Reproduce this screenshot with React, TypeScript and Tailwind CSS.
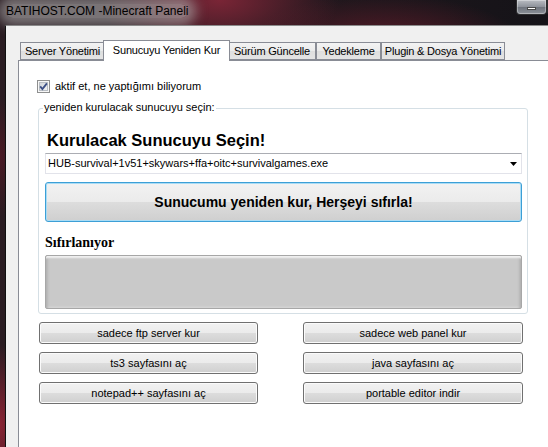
import React from "react";

const TABS = [
  { label: "Server Yönetimi", w: "w-[85px]" },
  { label: "Sunucuyu Yeniden Kur", w: "w-[127px]", active: true },
  { label: "Sürüm Güncelle", w: "w-[88px]" },
  { label: "Yedekleme", w: "w-[65px]" },
  { label: "Plugin & Dosya Yönetimi", w: "w-[124px]" },
];

const BUTTONS = [
  "sadece ftp server kur",
  "sadece web panel kur",
  "ts3 sayfasını aç",
  "java sayfasını aç",
  "notepad++ sayfasını aç",
  "portable editor indir",
];

function CheckBox() {
  return (
    <svg width="13" height="13" viewBox="0 0 13 13" className="shrink-0">
      <defs>
        <linearGradient id="cbFill" x1="0" y1="0" x2="1" y2="1">
          <stop offset="0" stopColor="#cfd3d8" />
          <stop offset="1" stopColor="#f4f5f6" />
        </linearGradient>
      </defs>
      <rect x="0.5" y="0.5" width="12" height="12" fill="#f7f7f7" stroke="#8e8f8f" />
      <rect x="2.5" y="2.5" width="8" height="8" fill="url(#cbFill)" stroke="#b9bec4" />
      <path d="M3.2 6.4 L5.4 9 L9.9 3.4" fill="none" stroke="#3c4f85" strokeWidth="1.8" />
    </svg>
  );
}

function WinButton({ children }: { children: React.ReactNode }) {
  return (
    <button className="h-[22px] rounded-[3px] border border-[#707070] bg-[linear-gradient(to_bottom,#f2f2f2_0%,#ebebeb_50%,#dddddd_50%,#cfcfcf_100%)] shadow-[inset_0_0_0_1px_#fbfbfb] text-[11px] leading-[13px] text-black">
      {children}
    </button>
  );
}

export default function App() {
  return (
    <div className="w-[548px] h-[447px] overflow-hidden flex flex-col font-['Liberation_Sans',Arial,sans-serif] bg-[#1b1418] bg-[radial-gradient(ellipse_120px_60px_at_40%_0%,#7a2536_0%,transparent_100%),radial-gradient(ellipse_140px_50px_at_70%_10%,#5a1b28_0%,transparent_100%),radial-gradient(ellipse_30px_80px_at_0%_95%,#8a2434_0%,transparent_100%),radial-gradient(ellipse_20px_60px_at_0%_35%,#4a1a24_0%,transparent_100%),linear-gradient(to_right,#2a1c22,#151318)]">
      {/* title bar */}
      <div className="h-[25px] shrink-0 flex items-start">
        <span className="mt-[4px] ml-[6px] text-[12px] leading-[14px] text-black bg-[#bdbdbd]/55 rounded-[8px] shadow-[0_0_12px_8px_rgba(185,185,185,0.55)]">
          BATIHOST.COM -Minecraft Paneli
        </span>
        <div className="flex-1" />
        <div className="flex shrink-0 -mr-[26px]">
          <div className="w-[31px] h-[15px] rounded-b-[4px] border border-t-0 border-[#2e2e30] bg-[linear-gradient(to_bottom,#b9bcc2_0%,#8d9199_50%,#6e737c_50%,#8c9098_100%)] shadow-[inset_0_0_0_1px_rgba(255,255,255,0.35)] flex items-center justify-center">
            <div className="w-[9px] h-[3px] bg-white border border-[#4a4a4a] mt-[2px]" />
          </div>
          <div className="w-[27px] h-[15px] rounded-b-[4px] border border-t-0 border-[#2e2e30] bg-[linear-gradient(to_bottom,#b9bcc2_0%,#8d9199_50%,#6e737c_50%,#8c9098_100%)]" />
        </div>
      </div>

      <div className="flex-1 flex min-h-0">
        <div className="w-[5px] shrink-0" />
        {/* client area */}
        <div className="flex-1 flex flex-col bg-[#f0f0f0] border-l border-t border-l-[#101010] border-t-[#8a8a8a] pt-[14px] pl-[12px]">
          <div className="flex items-start h-[21px] pl-[2px] tracking-[-0.2px] text-[11px] text-black">
            {TABS.map((t) =>
              t.active ? (
                <div
                  key={t.label}
                  className={`${t.w} h-[21px] -mx-[2px] relative z-10 bg-white border border-b-0 border-[#898c95] flex items-center justify-center pb-[1px] whitespace-nowrap`}
                >
                  {t.label}
                </div>
              ) : (
                <div
                  key={t.label}
                  className={`${t.w} h-[18px] mt-[2px] bg-[linear-gradient(to_bottom,#f3f3f3_0%,#ebebeb_50%,#dedede_50%,#e4e4e4_100%)] border border-[#898c95] flex items-center justify-center whitespace-nowrap`}
                >
                  {t.label}
                </div>
              )
            )}
          </div>

          {/* tab page */}
          <div className="flex-1 -mt-px bg-white border-l border-t border-[#898c95] flex flex-col text-[11px] text-black">
            <div className="mt-[19px] ml-[18px] flex items-center gap-[5px] h-[13px]">
              <CheckBox />
              <span className="leading-[13px]">aktif et, ne yaptığımı biliyorum</span>
            </div>

            <div className="mt-[15px] ml-[19px] w-[490px] relative border border-[#d5dfe5] rounded-[3px] pl-[6px] pr-[5px] pb-[4px] flex flex-col">
              <span className="absolute left-[4px] top-[-8px] px-[1px] bg-white leading-[13px]">
                yeniden kurulacak sunucuyu seçin:
              </span>

              <div className="mt-[22px] text-[16.5px] leading-[19px] font-bold pl-[2px]">
                Kurulacak Sunucuyu Seçin!
              </div>

              <div className="mt-[3px] h-[21px] border border-[#e2e3ea] border-t-[#abadb3] bg-white flex items-center pl-[2px] pr-[4px]">
                <span className="flex-1 leading-[13px]">
                  HUB-survival+1v51+skywars+ffa+oitc+survivalgames.exe
                </span>
                <svg width="7" height="4" viewBox="0 0 7 4">
                  <polygon points="0,0 7,0 3.5,4" fill="#000" />
                </svg>
              </div>

              <button className="mt-[8px] h-[40px] rounded-[3px] border border-[#3c9fd6] bg-[linear-gradient(to_bottom,#f2f2f2_0%,#ebebeb_50%,#dddddd_50%,#cfcfcf_100%)] shadow-[inset_0_0_0_1px_#a9dcf5] text-[14px] leading-[16px] font-bold text-black">
                Sunucumu yeniden kur, Herşeyi sıfırla!
              </button>

              <div className="mt-[13px] text-[14px] leading-[16px] font-bold font-['Liberation_Serif','Times_New_Roman',serif]">
                Sıfırlanıyor
              </div>

              <div className="mt-[4px] h-[54px] rounded-[2px] border border-[#a7a7a7] bg-[#c9c9c9] shadow-[inset_0_3px_2px_-1px_#f2f2f2,inset_3px_0_3px_-2px_#a2a2a2,inset_-3px_0_3px_-2px_#a2a2a2,inset_0_-2px_2px_-1px_#dcdcdc]" />
            </div>

            <div className="mt-[8px] ml-[20px] grid grid-cols-[219px_220px] gap-x-[45px] gap-y-[8px]">
              {BUTTONS.map((b) => (
                <WinButton key={b}>{b}</WinButton>
              ))}
            </div>
          </div>
        </div>
      </div>
    </div>
  );
}
